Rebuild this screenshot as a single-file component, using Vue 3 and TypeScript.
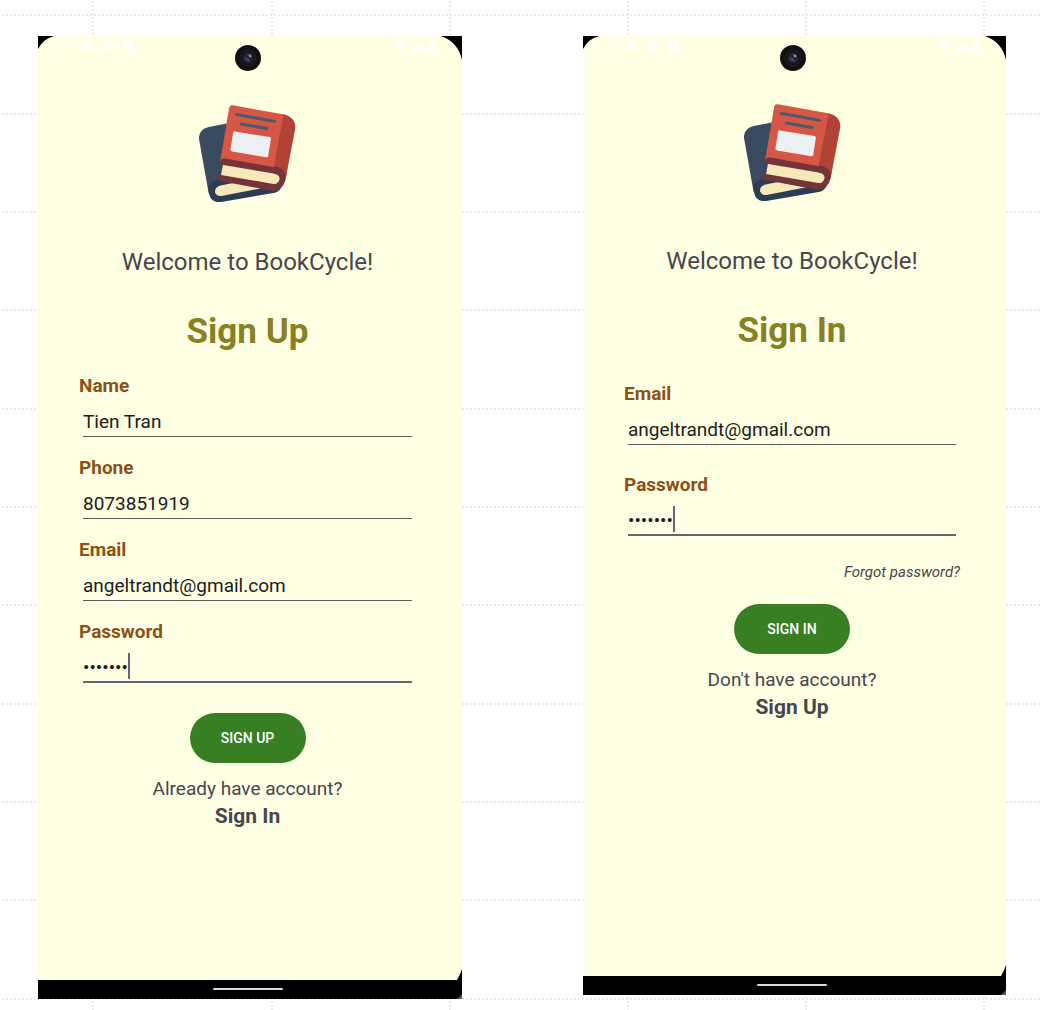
<script setup lang="ts">
import { reactive } from 'vue'

interface Field {
  id: string
  label: string
  type: string
  value: string
  active?: boolean
}

interface Screen {
  key: string
  time: string
  title: string
  fields: Field[]
  forgot: boolean
  action: string
  prompt: string
  link: string
}

const screens = reactive<Screen[]>([
  {
    key: 'signup',
    time: '10:24',
    title: 'Sign Up',
    fields: [
      { id: 'up-name', label: 'Name', type: 'text', value: 'Tien Tran' },
      { id: 'up-phone', label: 'Phone', type: 'tel', value: '8073851919' },
      { id: 'up-email', label: 'Email', type: 'email', value: 'angeltrandt@gmail.com' },
      { id: 'up-password', label: 'Password', type: 'password', value: 'abcdefg', active: true },
    ],
    forgot: false,
    action: 'SIGN UP',
    prompt: 'Already have account?',
    link: 'Sign In',
  },
  {
    key: 'signin',
    time: '10:23',
    title: 'Sign In',
    fields: [
      { id: 'in-email', label: 'Email', type: 'email', value: 'angeltrandt@gmail.com' },
      { id: 'in-password', label: 'Password', type: 'password', value: 'abcdefg', active: true },
    ],
    forgot: true,
    action: 'SIGN IN',
    prompt: "Don't have account?",
    link: 'Sign Up',
  },
])

const columns = [93, 272, 450, 628, 806, 984]
const rows = [15, 114, 212, 310, 409, 507, 605, 704, 802, 900, 999]
</script>

<template>
  <div class="board">
    <svg class="grid" width="100%" height="100%" aria-hidden="true">
      <line v-for="x in columns" :key="'c' + x" :x1="x" :x2="x" y1="1" y2="100%" />
      <line v-for="y in rows" :key="'r' + y" x1="2" x2="100%" :y1="y" :y2="y" />
    </svg>

    <section v-for="s in screens" :key="s.key" class="phone" :class="s.key">
      <header class="status">
        <span class="time">{{ s.time }}</span>
        <svg v-for="n in 2" :key="n" class="sys" viewBox="0 0 12 12" aria-hidden="true">
          <g fill="none" stroke="#fff">
            <circle cx="6" cy="6" r="3" stroke-width="3" />
            <circle cx="6" cy="6" r="5" stroke-width="2" stroke-dasharray="2.6 2.636" />
          </g>
        </svg>
        <svg class="sys" viewBox="0 0 12 12" aria-hidden="true">
          <path fill="#fff" fill-rule="evenodd" d="M6 0l5.500 2v3.500c0 3-2.200 5.500-5.500 6.500C2.700 11 .5 8.500.5 5.500V2zM6 4a2 2 0 1 0 0 4a2 2 0 1 0 0-4" />
        </svg>
        <svg class="signals" viewBox="0 0 42 13" aria-hidden="true">
          <g fill="#fff">
            <path d="M0 3Q6.500-2 13 3L6.500 12z" />
            <path d="M15 12L27 0v12z" />
            <path d="M34 2h2V0h3v2h2v10h-7z" />
          </g>
        </svg>
        <svg class="camera" viewBox="0 0 26 26" aria-hidden="true">
          <circle cx="13" cy="13" r="13" fill="#101012" />
          <circle cx="13" cy="13" r="8" fill="#17171a" stroke="#202024" />
          <circle cx="13" cy="13" r="5" fill="#26242f" />
          <path d="M9 12q2 6 6 4l-2-3z" fill="#35455c" />
          <path d="M12 9q5-1 5 4l-3-1z" fill="#553b68" />
          <circle cx="15" cy="11" r="1" fill="#c3a9ce" />
        </svg>
      </header>

      <main class="content">
        <svg class="logo" viewBox="27 30 290 290" role="img" aria-label="BookCycle">
          <path fill="#3a4a60" d="M110 85L56 96Q25 103 27 132L56 294L270 270V85z" />
          <path fill="#2d3c55" d="M54 275Q63 257 91 252L150 255L272 279Q264 291 250 293L94 320Q62 324 57 294z" />
          <path fill="#f6e8b9" d="M91 271L145 260L214 279L94 302Q78 303 75 291Q74 276 91 271z" />
          <path fill="#74343a" d="M98 205L93 238Q83 238 82 246Q82 256 94 258L246 286Q276 289 286 253L291 219L250 200z" />
          <path fill="#f6e8b9" d="M99 207L252 232Q268 236 268 251Q264 268 249 266L93 239z" />
          <path fill="#74343a" d="M91 190L89 202Q91 208 104 210L246 234Q266 237 270 250L282 256L289 216L258 197z" />
          <path fill="#b14335" d="M278 57Q316 66 315 99L287 246Q286 218 251 212z" />
          <path fill="#d65745" d="M128 31L279 58L251 216L102 189Q94 189 90 199L117 40Q119 29 128 31z" />
          <g stroke="#485a6b" stroke-width="9" stroke-linecap="round">
            <path d="M139 58L253 79" />
            <path d="M154 87L230 100" />
          </g>
          <path fill="#ecf0f1" d="M134 109L238 126Q243 127 242 132L234 182Q233 187 228 186L126 169Q121 168 121 163L129 113Q130 108 134 109z" />
        </svg>
        <p class="welcome">Welcome to BookCycle!</p>
        <h1>{{ s.title }}</h1>

        <form @submit.prevent>
          <div class="fields">
            <div v-for="f in s.fields" :key="f.id" class="field" :class="{ active: f.active }">
              <label :for="f.id">{{ f.label }}</label>
              <input :id="f.id" v-model="f.value" :type="f.type" autocomplete="off" spellcheck="false" />
              <span v-if="f.active" class="caret" aria-hidden="true"></span>
            </div>
          </div>
          <a v-if="s.forgot" class="forgot" href="#">Forgot password?</a>
          <button type="submit">{{ s.action }}</button>
        </form>
        <p class="prompt">{{ s.prompt }}</p>
        <a class="switch" href="#">{{ s.link }}</a>
      </main>

      <footer class="nav"><span class="pill"></span></footer>

      <svg class="corner top-left" viewBox="0 0 16 13" aria-hidden="true"><path d="M0 0H16Q5 3 0 13z" /></svg>
      <svg class="corner top-right" viewBox="0 0 21 24" aria-hidden="true"><path d="M0 0H21V24Q17 6 0 0z" /></svg>
      <svg class="corner bottom-right" viewBox="0 0 5 30" aria-hidden="true">
        <path d="M5 0V30H0V11Q3 6 5 0z" /><path d="M5 25V30H0z" fill="#555" />
      </svg>
    </section>
  </div>
</template>

<style>
body {
  margin: 0;
  background: #fff;
}
</style>

<style scoped>
.board {
  position: relative;
  display: grid;
  grid-template-columns: 424fr 423fr;
  column-gap: 121px;
  align-items: start;
  box-sizing: border-box;
  min-height: 100vh;
  padding: 36px 36px 11px 38px;
  font-family: Roboto, "Liberation Sans", sans-serif;
  color: #49454f;
}
.grid {
  position: absolute;
  inset: 0;
}
.grid line {
  stroke: #e9e9e9;
  stroke-width: 2;
  stroke-dasharray: 2 2;
}
.phone {
  position: relative;
  display: flex;
  flex-direction: column;
  min-width: 0;
  background: #ffffe3;
}
.signup {
  aspect-ratio: 424 / 963;
}
.signin {
  aspect-ratio: 423 / 959;
}
.status {
  position: relative;
  display: flex;
  align-items: center;
  gap: 9px;
  height: 20px;
  padding: 0 25px 0 3px;
}
.time {
  width: 30px;
  font-size: 13px;
  line-height: 20px;
  color: #fff;
}
.sys {
  width: 12px;
  height: 12px;
}
.signals {
  width: 42px;
  height: 13px;
  margin-left: auto;
}
.camera {
  position: absolute;
  top: 9px;
  left: calc(50% - 15px);
  width: 26px;
  height: 26px;
}
.content {
  display: flex;
  flex: 1;
  flex-direction: column;
  align-items: center;
  padding: 49px 46px 0 41px;
}
.signin .content {
  padding-top: 48px;
}
.logo {
  width: 97px;
  height: 97px;
}
.welcome {
  margin: 44px 0 0;
  font-size: 24px;
  line-height: 32px;
}
h1 {
  margin: 32px 0 0;
  font-size: 35px;
  font-weight: 700;
  line-height: 44px;
  color: #888024;
}
form {
  display: flex;
  flex-direction: column;
  align-items: center;
  align-self: stretch;
  margin-top: 20px;
}
.signin form {
  margin-top: 29px;
}
.fields {
  display: flex;
  flex-direction: column;
  align-self: stretch;
  gap: 19px;
}
.signin .fields {
  gap: 28px;
}
.field {
  position: relative;
  display: flex;
  flex-direction: column;
}
label {
  font-size: 19px;
  font-weight: 700;
  line-height: 24px;
  color: #8f4f18;
}
input {
  box-sizing: border-box;
  height: 39px;
  margin: 0 4px;
  padding: 8px 0 0;
  border: 0;
  border-bottom: 1px solid #5f5c58;
  border-radius: 0;
  outline: 0;
  background: none;
  font: inherit;
  font-size: 19px;
  color: #1d1b20;
}
.active input {
  padding-top: 10px;
  border-bottom: 2px solid #6b6278;
}
.caret {
  position: absolute;
  left: 49px;
  bottom: 4px;
  width: 2px;
  height: 26px;
  background: #6b6278;
}
a {
  color: inherit;
  text-decoration: none;
}
.forgot {
  align-self: flex-end;
  margin-top: 26px;
  font-size: 15px;
  font-style: italic;
  line-height: 20px;
}
button {
  width: 116px;
  height: 50px;
  margin-top: 30px;
  padding: 0;
  border: 0;
  border-radius: 25px;
  background: #387f23;
  font: inherit;
  font-size: 14px;
  font-weight: 500;
  color: #fff;
}
.forgot + button {
  margin-top: 22px;
}
.prompt {
  margin: 13px 0 0;
  font-size: 19px;
  line-height: 26px;
}
.switch {
  font-size: 21px;
  font-weight: 700;
  line-height: 28px;
}
.nav {
  display: flex;
  align-items: center;
  justify-content: center;
  box-sizing: border-box;
  height: 19px;
  padding: 0 5px 2px 0;
  background: #000;
}
.pill {
  width: 70px;
  height: 2px;
  border-radius: 1px;
  background: #dcd8dc;
}
.corner {
  position: absolute;
}
.top-left {
  top: 0;
  left: 0;
  width: 16px;
  height: 13px;
}
.top-right {
  top: 0;
  right: 0;
  width: 21px;
  height: 24px;
}
.bottom-right {
  right: 0;
  bottom: 0;
  width: 5px;
  height: 30px;
}
</style>
